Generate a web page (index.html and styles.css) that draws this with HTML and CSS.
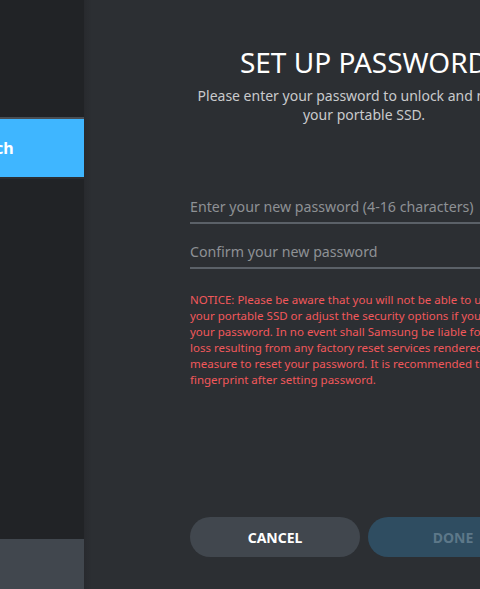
FILE: index.html
```html
<!DOCTYPE html>
<html lang="en">

<head>
  <meta charset="UTF-8">
  <meta name="viewport" content="width=device-width, initial-scale=1.0">
  <title>Set Up Password</title>
  <link rel="stylesheet" href="styles.css">
</head>

<body>
  <div class="app">
    <div class="sidebar">
      <div class="side-top"></div>
      <div class="side-item">T7 Touch</div>
      <div class="side-fill"></div>
      <div class="side-bottom"></div>
    </div>

    <div class="panel">
      <h1 class="title">SET UP PASSWORD</h1>
      <p class="subtitle">Please enter your password to unlock and manage<br>your portable SSD.</p>

      <form class="form" onsubmit="return false;">
        <input type="password" class="field" placeholder="Enter your new password (4-16 characters)">
        <input type="password" class="field" placeholder="Confirm your new password">
      </form>

      <p class="notice">NOTICE: Please be aware that you will not be able to unlock<br>
        your portable SSD or adjust the security options if you forget<br>
        your password. In no event shall Samsung be liable for any data<br>
        loss resulting from any factory reset services rendered as a<br>
        measure to reset your password. It is recommended to register<br>
        fingerprint after setting password.</p>

      <div class="buttons">
        <button type="button" class="btn cancel">CANCEL</button>
        <button type="button" class="btn done" disabled>DONE</button>
      </div>
    </div>
  </div>
</body>

</html>
```

FILE: styles.css
```css
body {
  margin: 0;
  background-color: #2c2f33;
  font-family: 'Noto Sans', sans-serif;
  overflow: hidden;
  height: 589px;
}

.app {
  display: flex;
  height: 589px;
  margin-left: -116px;
}

.sidebar {
  width: 200px;
  flex-shrink: 0;
  display: flex;
  flex-direction: column;
  background-color: #212326;
}

.side-top {
  height: 117px;
}

.side-item {
  height: 58px;
  border-top: 2px solid #494e54;
  border-bottom: 2px solid #2a2d31;
  background-color: #3fb6ff;
  color: white;
  font-weight: bold;
  font-size: 16px;
  line-height: 58px;
  padding-left: 60px;
}

.side-fill {
  flex: 1;
}

.side-bottom {
  height: 50px;
  background-color: #41474e;
}

.panel {
  width: 348px;
  flex-shrink: 0;
  padding: 0 106px;
  background: linear-gradient(to right, #282a2e, #2c2f33 8px);
  display: flex;
  flex-direction: column;
  align-items: center;
}

.title {
  margin: 44px 0 0;
  font-size: 28px;
  font-weight: normal;
  color: white;
  line-height: 36px;
}

.subtitle {
  margin: 6px -40px 0;
  font-size: 14px;
  line-height: 19px;
  color: #c9cacc;
  text-align: center;
}

.form {
  width: 100%;
  margin-top: 64px;
  display: flex;
  flex-direction: column;
  gap: 9px;
}

.field {
  width: 100%;
  box-sizing: border-box;
  background: transparent;
  border: none;
  border-bottom: 2px solid #5b6168;
  padding: 9px 0 6px;
  font-family: inherit;
  font-size: 14.2px;
  color: white;
  outline: none;
}

.field::placeholder {
  color: #8e9195;
}

.notice {
  align-self: flex-start;
  margin: 23px 0 0;
  font-size: 11.5px;
  line-height: 16px;
  color: #f2585b;
  white-space: nowrap;
}

.buttons {
  margin-top: auto;
  margin-bottom: 32px;
  width: 100%;
  display: flex;
  gap: 8px;
}

.btn {
  flex: 1;
  height: 40px;
  border: none;
  border-radius: 20px;
  font-family: inherit;
  font-size: 14px;
  font-weight: bold;
}

.cancel {
  background-color: #41474e;
  color: white;
}

.done {
  background-color: #2f4d61;
  color: #5d7889;
}
```
